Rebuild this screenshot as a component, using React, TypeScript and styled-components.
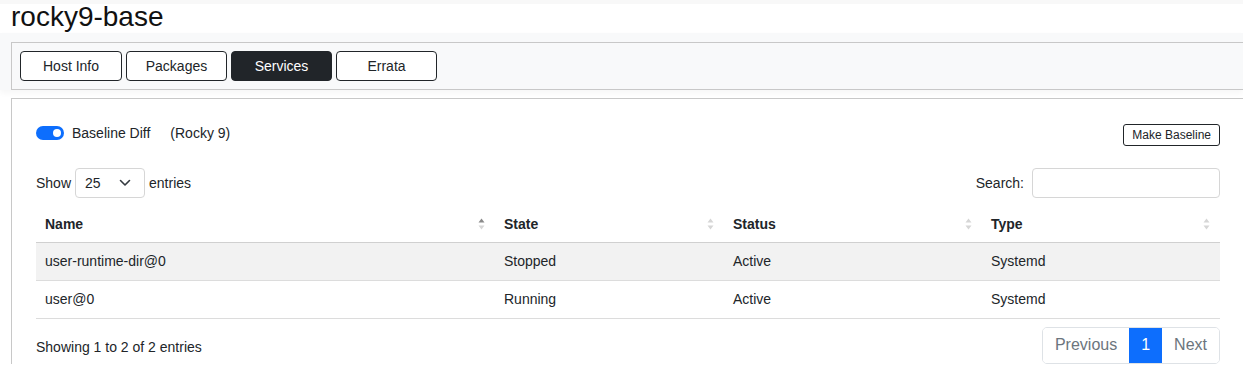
import React from 'react';
import styled, { createGlobalStyle } from 'styled-components';

const GlobalStyle = createGlobalStyle`
  html, body {
    margin: 0;
    padding: 0;
    overflow: hidden;
    background: #fff;
  }
  body {
    font-family: 'Liberation Sans', Arial, sans-serif;
    color: #212529;
  }
`;

interface Service {
  name: string;
  state: string;
  status: string;
  type: string;
}

const services: Service[] = [
  { name: 'user-runtime-dir@0', state: 'Stopped', status: 'Active', type: 'Systemd' },
  { name: 'user@0', state: 'Running', status: 'Active', type: 'Systemd' },
];

const tabs = ['Host Info', 'Packages', 'Services', 'Errata'];

const columns = [
  { label: 'Name', width: 459, sorted: true },
  { label: 'State', width: 229, sorted: false },
  { label: 'Status', width: 258, sorted: false },
  { label: 'Type', width: 238, sorted: false },
];

function SortIcon({ active }: { active: boolean }) {
  return (
    <SortSvg width="7" height="12" viewBox="0 0 7 12">
      <path d="M3.5 0.5 L6.5 4.5 L0.5 4.5 Z" fill={active ? '#8a8a8a' : '#d6d6d6'} />
      <path d="M3.5 11.5 L6.5 7.5 L0.5 7.5 Z" fill="#d6d6d6" />
    </SortSvg>
  );
}

function App() {
  return (
    <>
      <GlobalStyle />
      <TopStrip />
      <Title>rocky9-base</Title>
      <HeaderBand>
        <TabCard>
          {tabs.map((t) => (
            <TabButton key={t} $active={t === 'Services'}>
              {t}
            </TabButton>
          ))}
        </TabCard>
      </HeaderBand>
      <MainCard>
        <TopRow>
          <SwitchGroup>
            <Switch>
              <Knob />
            </Switch>
            <span>Baseline Diff</span>
            <Baseline>(Rocky 9)</Baseline>
          </SwitchGroup>
          <SmallButton>Make Baseline</SmallButton>
        </TopRow>
        <ControlsRow>
          <Label>
            Show
            <Select>
              <span>25</span>
              <svg width="12" height="8" viewBox="0 0 12 8">
                <path d="M1.5 1.5 L6 6 L10.5 1.5" fill="none" stroke="#343a40" strokeWidth="1.6" strokeLinecap="round" strokeLinejoin="round" />
              </svg>
            </Select>
            entries
          </Label>
          <Label>
            Search:
            <SearchInput />
          </Label>
        </ControlsRow>
        <Table>
          <thead>
            <tr>
              {columns.map((c) => (
                <HeadCell key={c.label} style={{ width: c.width }}>
                  <HeadInner>
                    {c.label}
                    <SortIcon active={c.sorted} />
                  </HeadInner>
                </HeadCell>
              ))}
            </tr>
          </thead>
          <tbody>
            {services.map((s, i) => (
              <Row key={s.name} $striped={i % 2 === 0}>
                <Cell>{s.name}</Cell>
                <Cell>{s.state}</Cell>
                <Cell>{s.status}</Cell>
                <Cell>{s.type}</Cell>
              </Row>
            ))}
          </tbody>
        </Table>
        <FooterRow>
          <Info>Showing 1 to 2 of 2 entries</Info>
          <Pagination>
            <PageItem>Previous</PageItem>
            <PageItem $active>1</PageItem>
            <PageItem>Next</PageItem>
          </Pagination>
        </FooterRow>
      </MainCard>
    </>
  );
}

const TopStrip = styled.div`
  height: 4px;
  background: #f8f8f8;
`;

const Title = styled.h1`
  margin: 0;
  padding-left: 11px;
  height: 29px;
  font-size: 28px;
  line-height: 26px;
  font-weight: 400;
  color: #111;
`;

const HeaderBand = styled.div`
  background: #f8f9fa;
  padding-top: 9px;
  padding-left: 11px;
  box-shadow: 0 3px 6px rgba(0, 0, 0, 0.04);
  margin-bottom: 8px;
`;

const TabCard = styled.div`
  display: flex;
  gap: 4px;
  padding: 8px;
  border: 1px solid #c8c8c8;
  border-right: none;
  background: #f8f9fa;
`;

const TabButton = styled.div<{ $active?: boolean }>`
  box-sizing: border-box;
  width: 101px;
  height: 30px;
  display: flex;
  align-items: center;
  justify-content: center;
  font-size: 14px;
  border: 1px solid #212529;
  border-radius: 4px;
  background: ${({ $active }) => ($active ? '#212529' : '#fff')};
  color: ${({ $active }) => ($active ? '#fff' : '#212529')};
  &:first-child {
    width: 102px;
  }
`;

const MainCard = styled.div`
  margin-left: 11px;
  margin-right: -20px;
  border: 1px solid #c8c8c8;
  border-bottom: none;
  padding: 0 42px 0 24px;
  background: #fff;
`;

const TopRow = styled.div`
  display: flex;
  justify-content: space-between;
  align-items: flex-start;
  padding-top: 25px;
`;

const SwitchGroup = styled.div`
  display: flex;
  align-items: center;
  height: 18px;
  font-size: 14px;
  gap: 8px;
`;

const Switch = styled.div`
  width: 28px;
  height: 14px;
  border-radius: 7px;
  background: #0d6efd;
  display: flex;
  align-items: center;
  justify-content: flex-end;
  padding-right: 3px;
  box-sizing: border-box;
`;

const Knob = styled.div`
  width: 8px;
  height: 8px;
  border-radius: 50%;
  background: #fff;
`;

const Baseline = styled.span`
  margin-left: 12px;
`;

const SmallButton = styled.div`
  box-sizing: border-box;
  height: 22px;
  padding: 0 8px;
  display: flex;
  align-items: center;
  font-size: 12px;
  border: 1px solid #212529;
  border-radius: 3px;
  color: #212529;
`;

const ControlsRow = styled.div`
  display: flex;
  justify-content: space-between;
  align-items: center;
  margin-top: 22px;
  margin-bottom: 7px;
`;

const Label = styled.div`
  display: flex;
  align-items: center;
  gap: 4px;
  font-size: 14px;
`;

const Select = styled.div`
  box-sizing: border-box;
  width: 70px;
  height: 30px;
  display: flex;
  align-items: center;
  justify-content: space-between;
  padding: 0 13px 0 9px;
  border: 1px solid #d6d6d6;
  border-radius: 4px;
  font-size: 14px;
`;

const SearchInput = styled.div`
  box-sizing: border-box;
  width: 188px;
  height: 30px;
  margin-left: 4px;
  border: 1px solid #d6d6d6;
  border-radius: 4px;
`;

const Table = styled.table`
  width: 100%;
  border-collapse: collapse;
  font-size: 14px;
`;

const HeadCell = styled.th`
  text-align: left;
  font-weight: 700;
  height: 37px;
  padding: 1px 10px 0 9px;
  border-bottom: 1px solid #d0d0d0;
  box-sizing: border-box;
`;

const HeadInner = styled.div`
  display: flex;
  align-items: center;
  justify-content: space-between;
`;

const SortSvg = styled.svg`
  display: block;
`;

const Row = styled.tr<{ $striped?: boolean }>`
  background: ${({ $striped }) => ($striped ? '#f2f2f2' : '#fff')};
`;

const Cell = styled.td`
  height: 37px;
  padding: 0 9px;
  border-bottom: 1px solid #dcdcdc;
  color: #212529;
`;

const FooterRow = styled.div`
  display: flex;
  justify-content: space-between;
  align-items: center;
  margin-top: 8px;
`;

const Info = styled.div`
  font-size: 14px;
  padding-top: 4px;
`;

const Pagination = styled.div`
  display: flex;
  border: 1px solid #dee2e6;
  border-radius: 5px;
  overflow: hidden;
  height: 37px;
  box-sizing: border-box;
`;

const PageItem = styled.div<{ $active?: boolean }>`
  display: flex;
  align-items: center;
  padding: 0 12px;
  font-size: 16px;
  background: ${({ $active }) => ($active ? '#0d6efd' : '#fff')};
  color: ${({ $active }) => ($active ? '#fff' : '#6c757d')};
`;

export default App;
